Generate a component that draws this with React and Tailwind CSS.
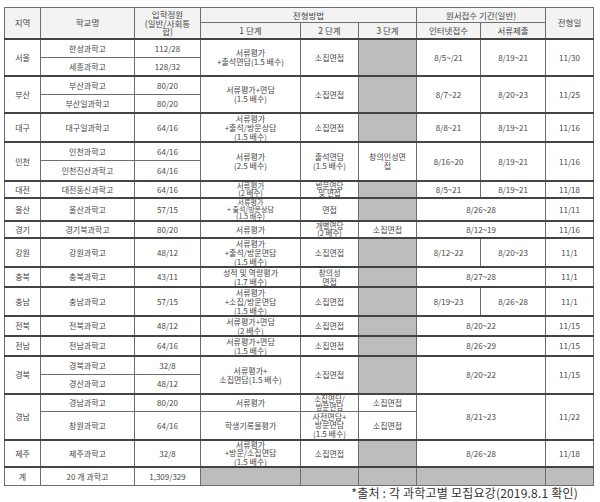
import React from "react";

const cell = "border border-[#6e6e6e] text-center align-middle px-[1px] py-0";
const gray = "bg-[#bdbdbd]";

function Td({ children, className = "", ...rest }) {
  return (
    <td className={`${cell} ${className}`} {...rest}>
      {children}
    </td>
  );
}

function App() {
  return (
    <div
      className="w-[600px] h-[502px] bg-white pt-[7px] pl-[4px] text-[#474747]"
      style={{ fontFamily: '"Noto Sans CJK KR", "Noto Sans", sans-serif' }}
    >
      <table className="w-[589px] table-fixed border-collapse border border-[#333] text-[8px] leading-[9px]">
        <colgroup>
          <col className="w-[36px]" />
          <col className="w-[94px]" />
          <col className="w-[66px]" />
          <col className="w-[100px]" />
          <col className="w-[58px]" />
          <col className="w-[58px]" />
          <col className="w-[64px]" />
          <col className="w-[65px]" />
          <col className="w-[48px]" />
        </colgroup>
        <thead className="bg-[#f3f3f3] text-[8.5px]">
          <tr className="h-[15px]">
            <Td rowSpan={2}>지역</Td>
            <Td rowSpan={2}>학교명</Td>
            <Td rowSpan={2} className="leading-[8.5px]">
              입학정원
              <br />
              (일반/사회통
              <br />
              합)
            </Td>
            <Td colSpan={3}>전형방법</Td>
            <Td colSpan={2}>원서접수 기간(일반)</Td>
            <Td rowSpan={2}>전형일</Td>
          </tr>
          <tr className="h-[16px]">
            <Td>1 단계</Td>
            <Td>2 단계</Td>
            <Td>3 단계</Td>
            <Td>인터넷접수</Td>
            <Td>서류제출</Td>
          </tr>
        </thead>
        <tbody>
          {/* 서울 */}
          <tr className="h-[19px] border-t-2 border-[#444]">
            <Td rowSpan={2}>서울</Td>
            <Td>한성과학고</Td>
            <Td>112/28</Td>
            <Td rowSpan={2}>
              서류평가
              <br />
              +출석면담(1.5 배수)
            </Td>
            <Td rowSpan={2}>소집면접</Td>
            <Td rowSpan={2} className={gray}></Td>
            <Td rowSpan={2}>8/5~/21</Td>
            <Td rowSpan={2}>8/19~21</Td>
            <Td rowSpan={2}>11/30</Td>
          </tr>
          <tr className="h-[18px]">
            <Td>세종과학고</Td>
            <Td>128/32</Td>
          </tr>

          {/* 부산 */}
          <tr className="h-[19px] border-t-2 border-[#444]">
            <Td rowSpan={2}>부산</Td>
            <Td>부산과학고</Td>
            <Td>80/20</Td>
            <Td rowSpan={2}>
              서류평가+면담
              <br />
              (1.5 배수)
            </Td>
            <Td rowSpan={2}>소집면접</Td>
            <Td rowSpan={2} className={gray}></Td>
            <Td rowSpan={2}>8/7~22</Td>
            <Td rowSpan={2}>8/20~23</Td>
            <Td rowSpan={2}>11/25</Td>
          </tr>
          <tr className="h-[18px]">
            <Td>부산일과학고</Td>
            <Td>80/20</Td>
          </tr>

          {/* 대구 */}
          <tr className="h-[29px] border-t-2 border-[#444]">
            <Td>대구</Td>
            <Td>대구일과학고</Td>
            <Td>64/16</Td>
            <Td>
              서류평가
              <br />
              +출석/방문상담
              <br />
              (1.5 배수)
            </Td>
            <Td>소집면접</Td>
            <Td className={gray}></Td>
            <Td>8/8~21</Td>
            <Td>8/19~21</Td>
            <Td>11/16</Td>
          </tr>

          {/* 인천 */}
          <tr className="h-[19px] border-t-2 border-[#444]">
            <Td rowSpan={2}>인천</Td>
            <Td>인천과학고</Td>
            <Td>64/16</Td>
            <Td rowSpan={2}>
              서류평가
              <br />
              (2.5 배수)
            </Td>
            <Td rowSpan={2}>
              출석면담
              <br />
              (1.5 배수)
            </Td>
            <Td rowSpan={2}>
              창의인성면
              <br />
              접
            </Td>
            <Td rowSpan={2}>8/16~20</Td>
            <Td rowSpan={2}>8/19~21</Td>
            <Td rowSpan={2}>11/16</Td>
          </tr>
          <tr className="h-[20px]">
            <Td>인천진산과학고</Td>
            <Td>64/16</Td>
          </tr>

          {/* 대전 */}
          <tr className="h-[17px] border-t-2 border-[#444]">
            <Td>대전</Td>
            <Td>대전동신과학고</Td>
            <Td>64/16</Td>
            <Td className="text-[7.5px] leading-[7.5px]">
              서류평가
              <br />
              (2 배수)
            </Td>
            <Td className="text-[7.5px] leading-[7.5px]">
              방문면담
              <br />및 면접
            </Td>
            <Td className={gray}></Td>
            <Td>8/5~21</Td>
            <Td>8/19~21</Td>
            <Td>11/18</Td>
          </tr>

          {/* 울산 */}
          <tr className="h-[23px] border-t-2 border-[#444]">
            <Td>울산</Td>
            <Td>울산과학고</Td>
            <Td>57/15</Td>
            <Td className="text-[7px] leading-[7px]">
              서류평가
              <br />+ 출석/방문상담
              <br />
              (1.5 배수)
            </Td>
            <Td>면접</Td>
            <Td className={gray}></Td>
            <Td colSpan={2}>8/26~28</Td>
            <Td>11/11</Td>
          </tr>

          {/* 경기 */}
          <tr className="h-[17px] border-t-2 border-[#444]">
            <Td>경기</Td>
            <Td>경기북과학고</Td>
            <Td>80/20</Td>
            <Td>서류평가</Td>
            <Td className="text-[7.5px] leading-[7.5px]">
              개별면담
              <br />
              (2 배수)
            </Td>
            <Td>소집면접</Td>
            <Td colSpan={2}>8/12~19</Td>
            <Td>11/16</Td>
          </tr>

          {/* 강원 */}
          <tr className="h-[29px] border-t-2 border-[#444]">
            <Td>강원</Td>
            <Td>강원과학고</Td>
            <Td>48/12</Td>
            <Td>
              서류평가
              <br />
              +출석/방문면담
              <br />
              (1.5 배수)
            </Td>
            <Td>소집면접</Td>
            <Td className={gray}></Td>
            <Td>8/12~22</Td>
            <Td>8/20~23</Td>
            <Td>11/1</Td>
          </tr>

          {/* 충북 */}
          <tr className="h-[19px] border-t-2 border-[#444]">
            <Td>충북</Td>
            <Td>충북과학고</Td>
            <Td>43/11</Td>
            <Td>
              성적 및 역량평가
              <br />
              (1.7 배수)
            </Td>
            <Td>
              창의성
              <br />
              면접
            </Td>
            <Td className={gray}></Td>
            <Td colSpan={2}>8/27~28</Td>
            <Td>11/1</Td>
          </tr>

          {/* 충남 */}
          <tr className="h-[29px] border-t-2 border-[#444]">
            <Td>충남</Td>
            <Td>충남과학고</Td>
            <Td>57/15</Td>
            <Td>
              서류평가
              <br />
              +소집/방문면담
              <br />
              (1.5 배수)
            </Td>
            <Td>소집면접</Td>
            <Td className={gray}></Td>
            <Td>8/19~23</Td>
            <Td>8/26~28</Td>
            <Td>11/1</Td>
          </tr>

          {/* 전북 */}
          <tr className="h-[20px] border-t-2 border-[#444]">
            <Td>전북</Td>
            <Td>전북과학고</Td>
            <Td>48/12</Td>
            <Td>
              서류평가+면담
              <br />
              (2 배수)
            </Td>
            <Td>소집면접</Td>
            <Td className={gray}></Td>
            <Td colSpan={2}>8/20~22</Td>
            <Td>11/15</Td>
          </tr>

          {/* 전남 */}
          <tr className="h-[20px] border-t-2 border-[#444]">
            <Td>전남</Td>
            <Td>전남과학고</Td>
            <Td>64/16</Td>
            <Td>
              서류평가+면담
              <br />
              (1.5 배수)
            </Td>
            <Td>소집면접</Td>
            <Td className={gray}></Td>
            <Td colSpan={2}>8/26~29</Td>
            <Td>11/15</Td>
          </tr>

          {/* 경북 */}
          <tr className="h-[19px] border-t-2 border-[#444]">
            <Td rowSpan={2}>경북</Td>
            <Td>경북과학고</Td>
            <Td>32/8</Td>
            <Td rowSpan={2}>
              서류평가+
              <br />
              소집면담(1.5 배수)
            </Td>
            <Td rowSpan={2}>소집면접</Td>
            <Td rowSpan={2} className={gray}></Td>
            <Td rowSpan={2} colSpan={2}>
              8/20~22
            </Td>
            <Td rowSpan={2}>11/15</Td>
          </tr>
          <tr className="h-[19px]">
            <Td>경산과학고</Td>
            <Td>48/12</Td>
          </tr>

          {/* 경남 */}
          <tr className="h-[18px] border-t-2 border-[#444]">
            <Td rowSpan={2}>경남</Td>
            <Td>경남과학고</Td>
            <Td>80/20</Td>
            <Td>서류평가</Td>
            <Td className="text-[7.5px] leading-[7.5px]">
              소집면담/
              <br />
              방문면담
            </Td>
            <Td>소집면접</Td>
            <Td rowSpan={2} colSpan={2}>
              8/21~23
            </Td>
            <Td rowSpan={2}>11/22</Td>
          </tr>
          <tr className="h-[28px]">
            <Td>창원과학고</Td>
            <Td>64/16</Td>
            <Td>학생기록물평가</Td>
            <Td className="leading-[8.5px]">
              사전면담+
              <br />
              방문면담
              <br />
              (1.5 배수)
            </Td>
            <Td>소집면접</Td>
          </tr>

          {/* 제주 */}
          <tr className="h-[27px] border-t-2 border-[#444]">
            <Td>제주</Td>
            <Td>제주과학고</Td>
            <Td>32/8</Td>
            <Td className="leading-[8.5px]">
              서류평가
              <br />
              +방문/소집면담
              <br />
              (1.5 배수)
            </Td>
            <Td>소집면접</Td>
            <Td className={gray}></Td>
            <Td colSpan={2}>8/26~28</Td>
            <Td>11/18</Td>
          </tr>

          {/* 계 */}
          <tr className="h-[18px] border-t-2 border-[#444]">
            <Td>계</Td>
            <Td>20 개 과학고</Td>
            <Td>1,309/329</Td>
            <Td className={gray}></Td>
            <Td className={gray}></Td>
            <Td className={gray}></Td>
            <Td colSpan={2} className={gray}></Td>
            <Td className={gray}></Td>
          </tr>
        </tbody>
      </table>
      <div className="pr-[22px] text-right text-[12px] leading-[14px] tracking-[0.2px] text-[#333]">
        *출처 : 각 과학고별 모집요강(2019.8.1 확인)
      </div>
    </div>
  );
}

export default App;
